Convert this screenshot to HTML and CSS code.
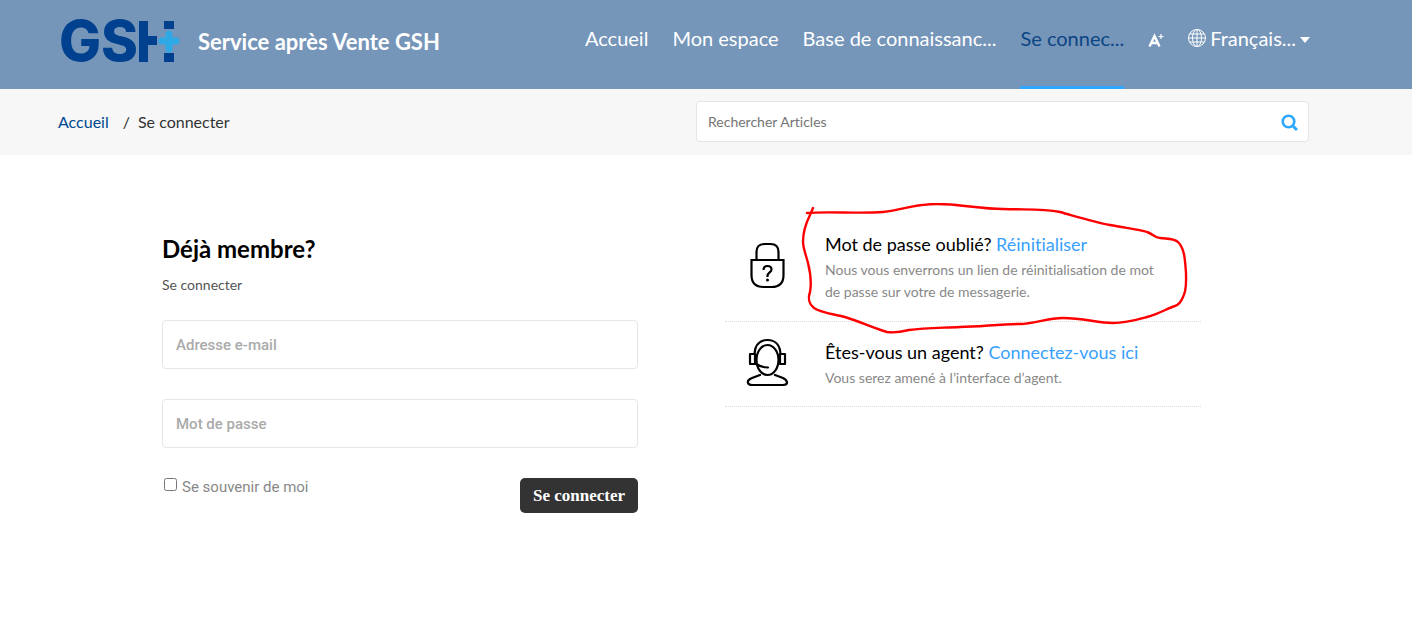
FILE: index.html
```html
<!DOCTYPE html>
<html lang="fr">
<head>
    <meta charset="UTF-8">
    <meta name="viewport" content="width=device-width, initial-scale=1.0">
    <title>Service après Vente GSH</title>
    <link rel="stylesheet" href="styles.css">
</head>
<body>
    <header class="header">
        <a class="brand" href="#">
            <svg class="logo" width="122" height="76" viewBox="0 -14 122 76" role="img" aria-label="GSH+">
                <g class="logo-letters">
                    <text x="-1" y="44">G</text>
                    <text x="41" y="44">S</text>
                </g>
                <path fill="#00418f" d="M79 4h9v15h9v9h-9v17h-9zM104 4h10v8h-10zM104 36h10v9h-10z"/>
                <path stroke="#2fa8e6" stroke-width="7" stroke-linecap="round" d="M109 17v15M102 24h14"/>
            </svg>
            <span class="brand-name">Service après Vente GSH</span>
        </a>
        <nav class="nav">
            <a href="#">Accueil</a>
            <a href="#">Mon espace</a>
            <a href="#">Base de connaissanc...</a>
            <a class="active" href="#">Se connec...</a>
            <button class="text-size" type="button" aria-label="Taille du texte">
                <svg width="16" height="16" viewBox="0 0 16 16" fill="none" stroke="#fff">
                    <path stroke-width="2.400" d="M1.500 14.500L6.500 4l5 10.500M3.500 11h6.500"/>
                    <path stroke-width="1.200" d="M13 2v5M10.500 4.500h5"/>
                </svg>
            </button>
            <button class="language" type="button">
                <svg width="18" height="18" viewBox="0 0 18 18" fill="none" stroke="#fff">
                    <circle cx="9" cy="9" r="8.500"/>
                    <ellipse cx="9" cy="9" rx="4.500" ry="8.500"/>
                    <path d="M9 .5v17M.5 9h17M1.500 5h15M1.500 13h15"/>
                </svg>
                <span>Français...</span>
                <svg class="caret" width="10" height="10" viewBox="0 0 10 10"><path fill="#fff" d="M0 4h10L5 10z"/></svg>
            </button>
        </nav>
    </header>

    <div class="subheader">
        <div class="breadcrumb">
            <a href="#">Accueil</a>
            <span class="separator">/</span>
            <span>Se connecter</span>
        </div>
        <form class="search">
            <input type="text" placeholder="Rechercher Articles" aria-label="Rechercher Articles">
            <button type="button" aria-label="Rechercher">
                <svg width="18" height="18" viewBox="0 0 18 18" fill="none" stroke="#2ea8ff">
                    <circle cx="8.500" cy="8.500" r="5.800" stroke-width="2.600"/>
                    <path stroke-width="3" d="M12.500 12.500l4.500 4.500"/>
                </svg>
            </button>
        </form>
    </div>

    <main class="content">
        <form class="login">
            <h1>Déjà membre?</h1>
            <p>Se connecter</p>
            <input class="field" type="email" placeholder="Adresse e-mail" aria-label="Adresse e-mail">
            <input class="field" type="password" placeholder="Mot de passe" aria-label="Mot de passe">
            <div class="login-footer">
                <label class="remember" for="remember">
                    <input type="checkbox" id="remember">
                    <span>Se souvenir de moi</span>
                </label>
                <button class="submit" type="button">Se connecter</button>
            </div>
        </form>

        <div class="help">
            <section class="help-item">
                <svg class="help-icon" width="50" height="50" viewBox="0 0 50 50" fill="none" stroke="#000" stroke-width="2.200">
                    <path d="M13.500 19V11q0-8 8-8h6q8 0 8 8v8"/>
                    <path d="M8.500 19h32v15q0 12-12 12h-8q-12 0-12-12z"/>
                    <path d="M20.500 29q0-4 4-4t4 3.500c0 3-4 3-4 6.500v1"/>
                    <circle cx="24.500" cy="39" r="1.500" fill="#000" stroke="none"/>
                </svg>
                <div class="help-text">
                    <h2>Mot de passe oublié? <a href="#">Réinitialiser</a></h2>
                    <p>Nous vous enverrons un lien de réinitialisation de mot de passe sur votre de messagerie.</p>
                </div>
                <svg class="marker" width="390" height="134" viewBox="0 0 390 134" fill="none" stroke="#f00" stroke-width="2.400" stroke-linecap="round" stroke-linejoin="round">
                    <path d="M8 10C30 8 60 11 84 9C105 7 113 1 138 1C162 1 180 6 204 6C225 7 243 5 261 9C279 14 295 19 311 22C326 25 340 26 348 29C354 31 356 35 361 35C369 36 374 35 379 39C386 46 386 58 387 70C387 78 388 87 384 94C382 99 379 102 376 103C369 105 360 111 348 114C337 117 327 120 314 120C298 120 285 115 264 115C248 115 235 121 221 121C200 121 180 124 161 124C140 125 125 125 110 127C102 129 95 130 88 129C77 126 62 119 46 114C34 111 22 110 15 105C9 100 9 95 11 89C13 78 11 68 9 60C7 52 4 45 4 39C4 28 7 20 11 12L14 5"/>
                </svg>
            </section>
            <section class="help-item">
                <svg class="help-icon" width="50" height="50" viewBox="0 0 50 50" fill="none" stroke="#000" stroke-width="2.200" stroke-linecap="round" stroke-linejoin="round">
                    <ellipse cx="24.500" cy="23" rx="11" ry="15"/>
                    <path d="M11.500 17C12 8 17 3 24.500 3S37 8 37.500 17"/>
                    <path d="M12 17H7v10h5zM37 17h5v10h-5zM13.500 27q4 3 11.500 3.500"/>
                    <path d="M17 38L9 41q-5 2-4 5 1 2 4 2h31q4 0 4-2.500 0-2.500-4-4.500l-8-3"/>
                </svg>
                <div class="help-text">
                    <h2>Êtes-vous un agent? <a href="#">Connectez-vous ici</a></h2>
                    <p>Vous serez amené à l’interface d’agent.</p>
                </div>
            </section>
        </div>
    </main>
</body>
</html>
```
FILE: styles.css
```css
* {
    box-sizing: border-box;
}
body {
    font-family: Lato, sans-serif;
    font-variant-ligatures: none;
    margin: 0;
    color: #333;
    background-color: #fff;
}
a {
    text-decoration: none;
}
button {
    font-family: inherit;
    cursor: pointer;
    border: none;
    background: none;
    padding: 0;
}
h1, h2, p {
    margin: 0;
}

.header {
    display: flex;
    justify-content: space-between;
    min-height: 89px;
    padding: 0 102px 0 60px;
    background-color: #7595b9;
}
.brand {
    display: flex;
    align-items: center;
    gap: 16px;
    padding-bottom: 7px;
}
.logo-letters {
    font-family: Inter, sans-serif;
    font-size: 56px;
    font-weight: 800;
    fill: #00418f;
}
.brand-name {
    color: #fff;
    font-size: 22px;
    font-weight: 700;
}
.nav {
    display: flex;
    gap: 24px;
}
.nav a, .language {
    display: flex;
    align-items: center;
    color: #fff;
    font-size: 20px;
    padding-bottom: 10px;
    border-bottom: 3px solid transparent;
}
.nav .active {
    color: #0c4584;
    border-bottom-color: #2ea8ff;
}
.text-size {
    padding-bottom: 6px;
}
.language {
    gap: 4px;
}

.subheader {
    display: flex;
    align-items: center;
    justify-content: space-between;
    min-height: 66px;
    padding: 0 103px 1px 58px;
    background-color: #f7f7f7;
}
.breadcrumb {
    display: flex;
    font-size: 16px;
}
.breadcrumb a {
    color: #00498f;
}
.separator {
    margin: 0 8px 0 14px;
}
.search {
    display: flex;
    align-items: center;
    width: 49%;
    height: 41px;
    padding: 0 10px 0 11px;
    background-color: #fff;
    border: 1px solid #e5e5e5;
    border-radius: 4px;
}
.search input {
    flex: 1;
    border: none;
    outline: none;
    padding: 0;
    font-family: inherit;
    font-size: 14px;
    font-variant-ligatures: none;
}
.search button {
    display: flex;
}

.content {
    display: grid;
    grid-template-columns: 1fr 1fr;
    gap: 87px;
    padding: 78px 211px 40px 162px;
}
.login h1 {
    color: #000;
    font-size: 24px;
    line-height: 32px;
}
.login p {
    color: #555;
    font-size: 14px;
    line-height: 20px;
    margin: 10px 0 25px;
}
.field {
    display: block;
    width: 100%;
    height: 49px;
    margin-bottom: 30px;
    padding: 0 13px;
    font-family: Roboto, sans-serif;
    font-size: 15px;
    font-weight: 500;
    border: 1px solid #e5e5e5;
    border-radius: 4px;
}
.field::placeholder {
    color: #aaa;
}
.login-footer {
    display: flex;
    justify-content: space-between;
    align-items: flex-start;
}
.remember {
    display: flex;
    align-items: flex-start;
    gap: 5px;
    color: #888;
    font-family: Roboto, sans-serif;
    font-size: 15px;
    line-height: 18px;
}
.remember input {
    margin: 0 0 0 2px;
}
.submit {
    min-height: 35px;
    padding: 0 13px;
    color: #fff;
    font-family: "Liberation Serif", serif;
    font-size: 17px;
    font-weight: 700;
    background-color: #333;
    border-radius: 5px;
}

.help-item {
    position: relative;
    display: flex;
    gap: 32px;
    padding: 0 32px 18px 18px;
    border-bottom: 1px dotted #ddd;
}
.help-icon {
    flex: none;
    margin-top: 8px;
}
.help-item + .help-item {
    padding-top: 19px;
    padding-bottom: 17px;
}
.help-item + .help-item .help-icon {
    margin: -4px 0;
}
.help-item h2 {
    color: #000;
    font-size: 18px;
    font-weight: 400;
    line-height: 22px;
    margin-bottom: 4px;
}
.help-item h2 a {
    color: #399fff;
}
.help-item p {
    color: #888;
    font-size: 14px;
    line-height: 22px;
}
/* hand-drawn circle around the reset link */
.marker {
    position: absolute;
    left: 74px;
    top: -30px;
    pointer-events: none;
}
```
